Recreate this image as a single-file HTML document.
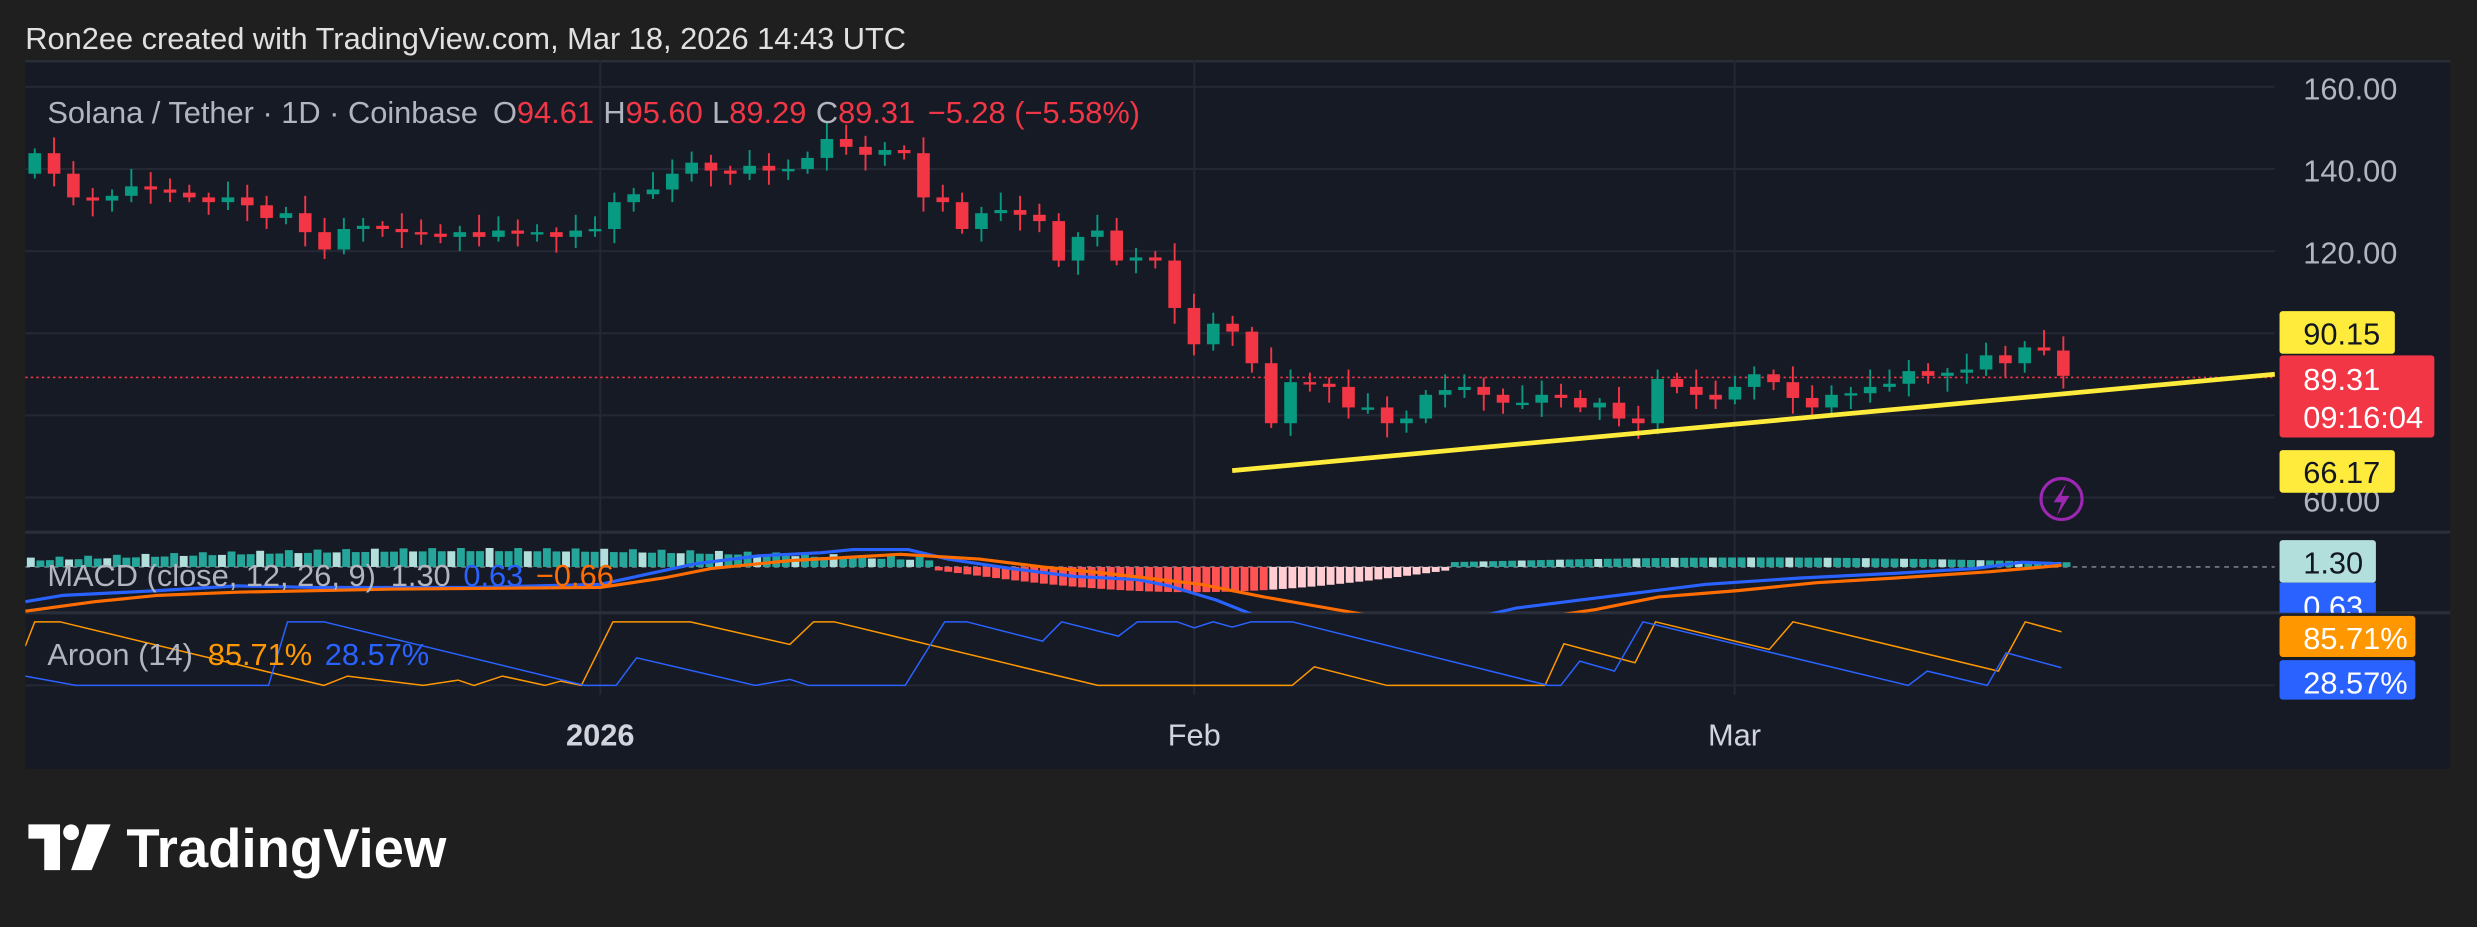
<!DOCTYPE html>
<html><head><meta charset="utf-8"><style>
html,body{margin:0;padding:0;background:#1f1f1f;}
svg{display:block;}
text{font-family:"Liberation Sans",sans-serif;}
</style></head><body>
<svg id="s" width="2477" height="927" viewBox="0 0 1568 587" preserveAspectRatio="none" xmlns="http://www.w3.org/2000/svg">
<rect width="1568" height="587" fill="#1f1f1f"/>
<text x="16" y="31" font-size="19.5" fill="#e0e0e0">Ron2ee created with TradingView.com, Mar 18, 2026 14:43 UTC</text>
<rect x="16" y="38" width="1535" height="449" fill="#161a25"/>
<rect x="16" y="38" width="1535" height="1.5" fill="#2a2e39"/>
<g stroke="#242835" stroke-width="1.3">
<line x1="16" y1="55" x2="1440" y2="55"/><line x1="16" y1="107" x2="1440" y2="107"/>
<line x1="16" y1="159" x2="1440" y2="159"/><line x1="16" y1="211" x2="1440" y2="211"/>
<line x1="16" y1="263" x2="1440" y2="263"/><line x1="16" y1="315" x2="1440" y2="315"/>
<line x1="380" y1="38" x2="380" y2="440"/><line x1="756" y1="38" x2="756" y2="440"/><line x1="1098" y1="38" x2="1098" y2="440"/>
<line x1="16" y1="434" x2="1440" y2="434"/>
</g>
<line x1="16" y1="337" x2="1551" y2="337" stroke="#2a2e39" stroke-width="2"/>
<line x1="16" y1="388" x2="1551" y2="388" stroke="#2a2e39" stroke-width="2"/>
<line x1="16" y1="239" x2="1440" y2="239" stroke="#f23645" stroke-width="1" stroke-dasharray="1.5 2"/>
<g id="candles"></g>
<line x1="780" y1="298" x2="1440" y2="237" stroke="#ffeb3b" stroke-width="3"/>
<circle cx="1305" cy="316" r="13" fill="none" stroke="#9c27b0" stroke-width="2"/>
<path d="M1308 306 L1300 318 L1305 318 L1302 327 L1310 314 L1305 314 Z" fill="#9c27b0"/>
<g font-size="19.5" fill="#b2b5be">
<text x="1458" y="63">160.00</text><text x="1458" y="115">140.00</text><text x="1458" y="167">120.00</text><text x="1458" y="324">60.00</text>
</g>
<rect x="1443" y="197" width="73" height="27" fill="#ffeb3b" rx="2"/>
<text x="1458" y="218" font-size="19.5" fill="#131722">90.15</text>
<rect x="1443" y="225" width="98" height="52" fill="#f23645" rx="2"/>
<text x="1458" y="247" font-size="19.5" fill="#fff">89.31</text>
<text x="1458" y="271" font-size="19.5" fill="#fff">09:16:04</text>
<rect x="1443" y="285" width="73" height="27" fill="#ffeb3b" rx="2"/>
<text x="1458" y="306" font-size="19.5" fill="#131722">66.17</text>
<text x="30" y="78" font-size="19.5" fill="#b2b5be">Solana / Tether · 1D · Coinbase <tspan dx="4">O</tspan><tspan fill="#f23645">94.61</tspan><tspan dx="6">H</tspan><tspan fill="#f23645">95.60</tspan><tspan dx="6">L</tspan><tspan fill="#f23645">89.29</tspan><tspan dx="6">C</tspan><tspan fill="#f23645">89.31</tspan><tspan dx="8" fill="#f23645">−5.28 (−5.58%)</tspan></text>
<defs><clipPath id="mc"><rect x="16" y="338" width="1424" height="50"/></clipPath><clipPath id="ac"><rect x="16" y="389" width="1424" height="50"/></clipPath><clipPath id="bc"><rect x="1443" y="369" width="61" height="19"/></clipPath></defs>
<g clip-path="url(#mc)">
<line x1="16" y1="359" x2="1440" y2="359" stroke="#787b86" stroke-width="1" stroke-dasharray="3 3"/>
<g id="hist"></g>
<polyline fill="none" stroke="#2962ff" stroke-width="2" points="16,381 40,377 100,374 150,371 200,372 300,372 380,370 440,357 480,352 520,350 540,348 575,348 600,354 640,360 680,365 720,367 740,371 770,380 800,392 930,392 960,385 1000,380 1040,375 1080,370 1140,366 1200,363 1250,360 1280,356 1305,357"/>
<polyline fill="none" stroke="#ff6d00" stroke-width="2" points="16,387 60,381 100,377 150,375 250,373 380,372 420,366 450,360 500,355 570,351 620,354 660,359 700,363 760,370 800,378 840,385 880,392 970,392 1010,386 1050,378 1100,374 1150,369 1200,366 1260,362 1305,358"/>
</g>
<g clip-path="url(#ac)">
<g transform="matrix(1 0 0 0.2108 0 291.1)">
<polyline fill="none" stroke="#ff9800" stroke-width="1.5" vector-effect="non-scaling-stroke" points="16,560 22,487 38,487 205,678 220,650 268,678 290,662 300,678 318,650 345,678 355,665 368,678 388,487 437,487 500,555 515,487 528,487 695,678 818,678 832,622 878,678 978,678 990,553 1035,610 1048,487 1120,570 1135,487 1265,635 1282,487 1305,517"/>
<polyline fill="none" stroke="#2962ff" stroke-width="1.5" vector-effect="non-scaling-stroke" points="16,650 48,678 170,678 182,487 205,487 370,678 390,678 403,595 478,678 500,660 512,678 573,678 598,487 612,487 660,545 672,487 708,530 720,487 745,487 756,505 768,487 780,503 792,487 818,487 980,678 988,678 1000,605 1022,635 1040,487 1208,678 1220,635 1258,678 1270,580 1305,625"/>
</g>
</g>
<text x="30" y="371" font-size="19.5" fill="#b2b5be">MACD (close, 12, 26, 9) <tspan dx="4">1.30</tspan><tspan dx="8" fill="#2962ff">0.63</tspan><tspan dx="8" fill="#ff6d00">−0.66</tspan></text>
<text x="30" y="421" font-size="19.5" fill="#b2b5be">Aroon (14) <tspan dx="4" fill="#ff9800">85.71%</tspan><tspan dx="8" fill="#2962ff">28.57%</tspan></text>
<rect x="1443" y="342" width="61" height="27" fill="#b2dfdb" rx="2"/>
<text x="1458" y="363" font-size="19.5" fill="#131722">1.30</text>
<rect x="1443" y="369" width="61" height="19" fill="#2962ff"/>
<text x="1458" y="391" font-size="19.5" fill="#fff" clip-path="url(#bc)">0.63</text>
<rect x="1443" y="390" width="86" height="26" fill="#ff9800" rx="2"/>
<text x="1458" y="411" font-size="19.5" fill="#fff">85.71%</text>
<rect x="1443" y="418" width="86" height="25" fill="#2962ff" rx="2"/>
<text x="1458" y="439" font-size="19.5" fill="#fff">28.57%</text>
<g font-size="19.5" fill="#d1d4dc" text-anchor="middle">
<text x="380" y="472" font-weight="bold">2026</text><text x="756" y="472">Feb</text><text x="1098" y="472">Mar</text>
</g>
<g fill="#fff">
<path d="M18 522 H38 V551 H28 V531 H18 Z"/>
<circle cx="45" cy="527" r="5"/>
<path d="M55 522 H70 L58 551 H45 Z"/>
</g>
<text x="80" y="549" font-size="34.5" font-weight="bold" fill="#fff">TradingView</text>
</svg>
<script>
(function(){
var ns="http://www.w3.org/2000/svg";
var c=[97,110,125,127,124,118,120,122,125,128,125,130,138,135,147,158,145,143,145,147,148,150,147,150,146,148,147,150,146,145,128,123,120,110,103,108,110,105,108,107,100,88,93,98,95,97,125,128,145,135,133,136,140,165,150,146,165,163,165,195,218,205,210,230,268,242,243,245,258,258,268,265,250,247,245,250,255,255,250,252,258,255,265,268,240,245,250,253,245,237,242,252,258,250,249,245,243,235,238,236,234,225,230,220,222,238];
var g=document.getElementById("candles"),h=document.getElementById("hist");
var o=110;
function el(n,a){var e=document.createElementNS(ns,n);for(var k in a)e.setAttribute(k,a[k]);return e;}
for(var i=0;i<c.length;i++){
 var x=22+i*12.23,cl=c[i],red=cl>o,col=red?"#f23645":"#089981";
 var t=Math.min(o,cl),b=Math.max(o,cl);
 var hi=t-(3+((i*7)%9)),lo=b+(3+((i*5)%8));
 g.appendChild(el("line",{x1:x,x2:x,y1:hi,y2:lo,stroke:col,"stroke-width":1.2}));
 g.appendChild(el("rect",{x:x-4,y:t,width:8,height:Math.max(b-t,1.5),fill:col}));
 o=cl;
}
for(var j=0;j<216;j++){
 var x=17+j*6.05,v;
 if(x<590){v=4+6*Math.sin((x-20)/570*Math.PI)+((j%3)?0:2);}
 else if(x<915){v=-(Math.sin((x-590)/325*Math.PI)*14+2);}
 else if(x<1306){v=3+3*Math.sin((x-915)/390*Math.PI);}
 else break;
 var col;
 if(v>=0){col=(j%4==0)?"#b2dfdb":"#26a69a";}
 else{col=(x<800)?"#ff5252":"#ffcdd2";}
 h.appendChild(el("rect",{x:x,y:v>=0?359-v:359,width:5,height:Math.abs(v),fill:col}));
}
})();
</script>
</body></html>
